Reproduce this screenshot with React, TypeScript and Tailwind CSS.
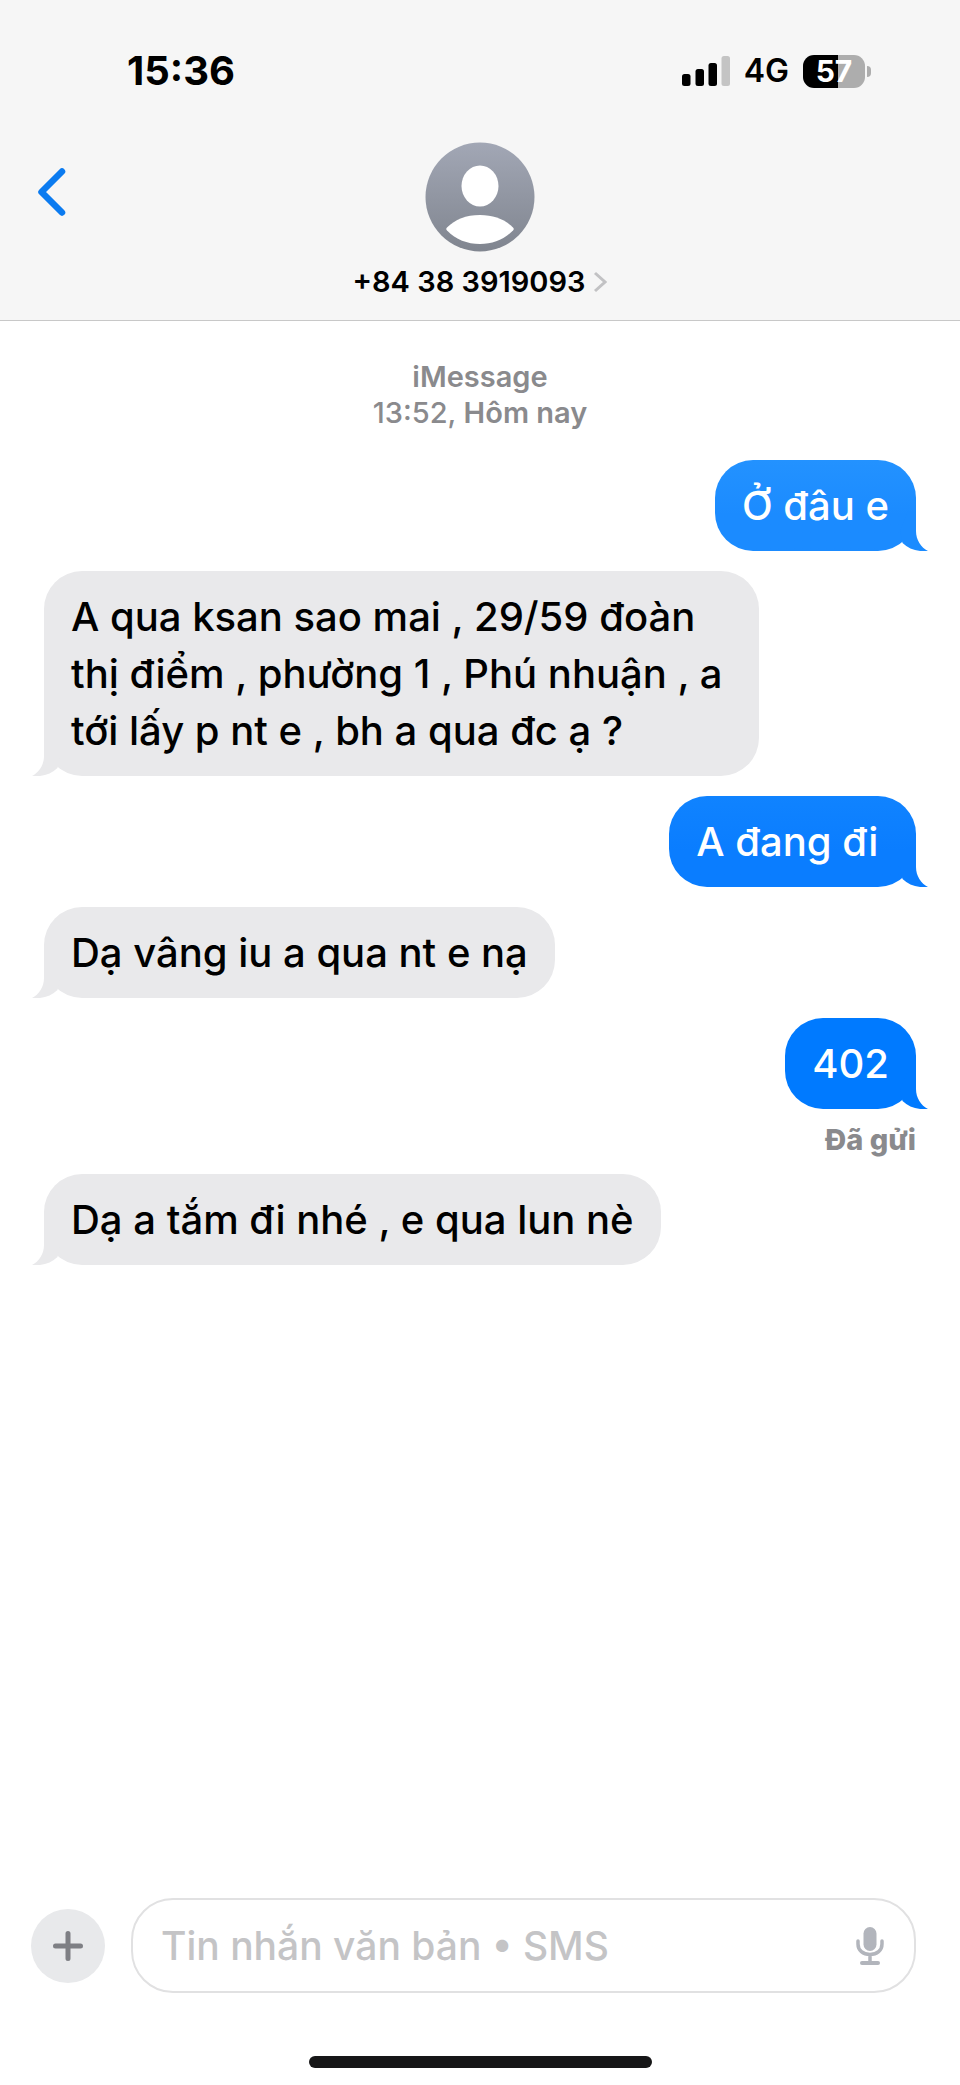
import { clsx } from "clsx";
import { useState } from "react";

type Side = "sent" | "received";

interface Message {
  id: number;
  side: Side;
  text: string;
  /** bubble fill, and the tail colour that meets its lower edge */
  fill: string;
  tail: string;
  status?: string;
}

const MESSAGES: Message[] = [
  {
    id: 1,
    side: "sent",
    text: "Ở đâu e",
    fill: "bg-linear-to-b from-[#2392ff] to-[#1b8bff] to-60%",
    tail: "text-[#1b8bff]",
  },
  {
    id: 2,
    side: "received",
    text: "A qua ksan sao mai , 29/59 đoàn thị điểm , phường 1 , Phú nhuận , a tới lấy p nt e , bh a qua đc ạ ?",
    fill: "bg-[#e9e9eb]",
    tail: "text-[#e9e9eb]",
  },
  {
    id: 3,
    side: "sent",
    // typed with a trailing space
    text: "A đang đi\u00a0",
    fill: "bg-linear-to-b from-[#1083ff] to-[#0a7dff] to-60%",
    tail: "text-[#0a7dff]",
  },
  {
    id: 4,
    side: "received",
    text: "Dạ vâng iu a qua nt e nạ",
    fill: "bg-[#e9e9eb]",
    tail: "text-[#e9e9eb]",
  },
  {
    id: 5,
    side: "sent",
    text: "402",
    fill: "bg-[#007aff]",
    tail: "text-[#007aff]",
    status: "Đã gửi",
  },
  {
    id: 6,
    side: "received",
    text: "Dạ a tắm đi nhé , e qua lun nè",
    fill: "bg-[#e9e9eb]",
    tail: "text-[#e9e9eb]",
  },
];

function SignalIcon() {
  return (
    <svg className="h-8 w-12" viewBox="0 0 48 32" aria-hidden="true">
      <rect x="0" y="19" width="8.5" height="12" rx="2.5" />
      <rect x="13.5" y="14" width="8.5" height="17" rx="2.5" />
      <rect x="26.5" y="8" width="8.5" height="23" rx="2.5" />
      <rect x="39.5" y="1" width="8.5" height="30" rx="2.5" fill="#c4c4c4" />
    </svg>
  );
}

function Battery() {
  return (
    <div className="flex items-center gap-0.5">
      <div className="flex h-[33px] w-[62px] items-center justify-center rounded-[11px] bg-[linear-gradient(90deg,#000_56%,#adadad_56%)] text-[30px] leading-none font-bold text-white">
        57
      </div>
      <div className="h-[11px] w-1 rounded-r-full bg-[#adadad]" />
    </div>
  );
}

function StatusBar() {
  return (
    <div className="flex h-[142px] items-start justify-between pt-12 pr-[89px] pl-[127px]">
      <span className="text-[40px] leading-[46px] font-bold">15:36</span>
      <div className="flex h-[46px] items-center gap-3.5">
        <SignalIcon />
        <span className="text-[32px] leading-none font-semibold">4G</span>
        <Battery />
      </div>
    </div>
  );
}

function Avatar() {
  return (
    <svg className="size-[110px]" viewBox="0 0 110 110" aria-hidden="true">
      <defs>
        <linearGradient id="avatar-fill" x1="0" y1="0" x2="0" y2="1">
          <stop offset="0" stopColor="#a2a7b5" />
          <stop offset="1" stopColor="#80858f" />
        </linearGradient>
      </defs>
      <circle cx="55" cy="55" r="54.5" fill="url(#avatar-fill)" />
      <ellipse cx="55" cy="44" rx="18.5" ry="20.5" fill="#fff" />
      <path d="M22 85.5C30 77.5 41 73 55 73S80 77.5 88 85.5Q89.5 87 88 88.5C79 97.5 68 102 55 102S31 97.5 22 88.5Q20.5 87 22 85.5Z" fill="#fff" />
    </svg>
  );
}

function Header() {
  return (
    <header className="border-b border-[#c8c8c8] bg-[#f6f6f6]">
      <StatusBar />
      <div className="grid grid-cols-[1fr_auto_1fr] items-start pb-5">
        <button type="button" aria-label="Quay lại" className="mt-6 ml-9 w-8">
          <svg className="h-[52px] w-8" viewBox="0 0 32 52" fill="none" aria-hidden="true">
            <path d="M26 5.5 5.5 26 26 46.5" stroke="#0b7bf0" strokeWidth="6.5" strokeLinecap="round" strokeLinejoin="round" />
          </svg>
        </button>
        <button type="button" className="flex flex-col items-center gap-3">
          <Avatar />
          <span className="flex items-center gap-2 text-[29px] leading-9 font-semibold">
            +84 38 3919093
            <svg className="h-6 w-3.5" viewBox="0 0 14 24" fill="none" aria-hidden="true">
              <path d="M2 3 12 12 2 21" stroke="#c2c2c4" strokeWidth="3" />
            </svg>
          </span>
        </button>
      </div>
    </header>
  );
}

function Tail({ side, className }: { side: Side; className: string }) {
  return (
    <svg
      viewBox="0 0 32 40"
      aria-hidden="true"
      className={clsx(
        "absolute bottom-0 h-10 w-8",
        side === "sent" ? "-right-3" : "-left-3 -scale-x-100",
        className
      )}
    >
      <path d="M20 0V20C20 29 25 36.5 32 40C21 41 13 38 6.5 32L4 20 12 0Z" fill="currentColor" />
    </svg>
  );
}

function Bubble({ message }: { message: Message }) {
  const { side, text, fill, tail, status } = message;
  const sent = side === "sent";

  return (
    <li className={clsx("flex flex-col", sent ? "items-end" : "items-start")}>
      <div
        className={clsx(
          "relative max-w-[82%] rounded-[38px] px-[27px] py-[17px]",
          "text-[40px] leading-[57px] font-medium",
          sent ? "text-white" : "text-black",
          fill
        )}
      >
        <Tail side={side} className={tail} />
        <p className="relative">{text}</p>
      </div>
      {status && (
        <span className="mt-[17px] text-[29px] leading-7 font-extrabold text-[#8a8a8d]">{status}</span>
      )}
    </li>
  );
}

function Composer() {
  const [draft, setDraft] = useState("");

  return (
    <footer>
      <div className="flex items-center gap-[26px] pr-11 pl-[31px]">
        <button
          type="button"
          aria-label="Thêm"
          className="flex size-[74px] flex-none items-center justify-center rounded-full bg-[#e8e9eb]"
        >
          <svg className="size-[30px]" viewBox="0 0 30 30" aria-hidden="true">
            <path d="M15 2.5V27.5M2.5 15H27.5" stroke="#7e7f84" strokeWidth="5" strokeLinecap="round" />
          </svg>
        </button>
        <div className="flex h-[95px] min-w-0 flex-1 items-center rounded-[42px] border-2 border-[#e1e1e2] pr-[30px] pl-7">
          <input
            type="text"
            aria-label="Tin nhắn văn bản"
            placeholder="Tin nhắn văn bản • SMS"
            value={draft}
            onChange={(e) => setDraft(e.target.value)}
            className="h-16 min-w-0 flex-1 bg-transparent text-[39px] font-medium outline-none placeholder:text-[#c4c4c6]"
          />
          <button type="button" aria-label="Đọc chính tả" className="flex-none">
            <svg className="h-[38px] w-7" viewBox="0 0 28 38" fill="none" aria-hidden="true">
              <rect x="7.5" y="0" width="13" height="24" rx="6.5" fill="#b2b5bc" />
              <path d="M2 14V17C2 23.5 7 27.5 14 27.5S26 23.5 26 17V14M14 27.5V35" stroke="#b2b5bc" strokeWidth="3.5" strokeLinecap="round" />
              <rect x="4" y="34" width="20" height="4" rx="2" fill="#b2b5bc" />
            </svg>
          </button>
        </div>
      </div>
      <div className="mt-[63px] mb-[17px] flex justify-center">
        <div className="h-3 w-[343px] rounded-full bg-[#161617]" />
      </div>
    </footer>
  );
}

export default function App() {
  return (
    <div className="flex min-h-screen flex-col bg-white font-['Inter','Noto_Sans',sans-serif] text-black">
      <Header />
      <main className="flex-1 px-11 pt-[38px]">
        <div className="text-center text-[29px] leading-9 font-semibold text-[#8a8a8d]">
          <p>iMessage</p>
          <p>
            <span className="font-medium">13:52,</span> Hôm nay
          </p>
        </div>
        <ul className="mt-[29px] flex flex-col gap-5">
          {MESSAGES.map((message) => (
            <Bubble key={message.id} message={message} />
          ))}
        </ul>
      </main>
      <Composer />
    </div>
  );
}
